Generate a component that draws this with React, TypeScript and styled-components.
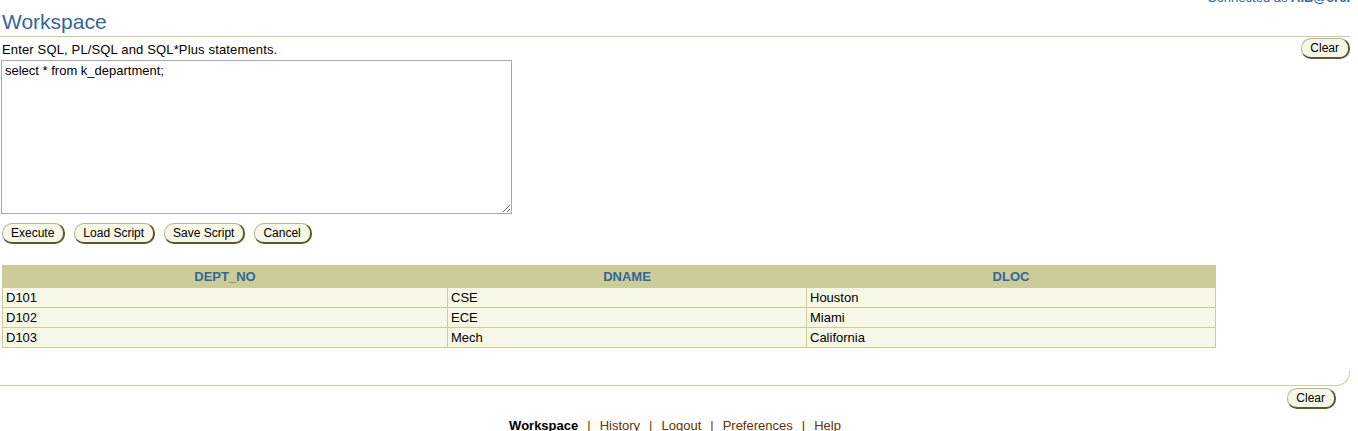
import React from "react";
import styled, { createGlobalStyle } from "styled-components";

const Global = createGlobalStyle`
  html, body { margin: 0; padding: 0; background: #fff; }
  body { font-family: "Liberation Sans", Arial, sans-serif; font-size: 13px; color: #000; }
`;

const Page = styled.div`
  padding: 0 8px 0 0;
  display: flex;
  flex-direction: column;
`;

const HeaderRow = styled.div`
  display: flex;
  justify-content: space-between;
  align-items: flex-start;
  height: 36px;
  border-bottom: 1px solid #cccc99;
`;

const Title = styled.h1`
  margin: 10px 0 0 2px;
  font-size: 21px;
  font-weight: normal;
  color: #336699;
  line-height: 24px;
`;

const Connected = styled.div`
  margin-top: -10px;
  font-size: 13px;
  color: #336699;
  line-height: 15px;
  b { font-weight: bold; }
`;

const InstrRow = styled.div`
  display: flex;
  justify-content: space-between;
  align-items: center;
  height: 23px;
  padding-left: 2px;
`;

const Instr = styled.span`
  font-size: 13px;
  line-height: 15px;
  margin-top: 1px;
  letter-spacing: 0.15px;
`;

const Btn = styled.button`
  font-family: "Liberation Sans", Arial, sans-serif;
  font-size: 12px;
  color: #000;
  background: #f7f7e7;
  height: 21px;
  padding: 0 9px 0 8px;
  border-radius: 10px;
  border-top: 1px solid #b5b59c;
  border-left: 1px solid #b5b59c;
  border-right: 2px solid #5a5a2a;
  border-bottom: 2px solid #5a5a2a;
  line-height: 16px;
  cursor: pointer;
`;

const Editor = styled.textarea`
  margin: 0 0 0 1px;
  width: 511px;
  height: 154px;
  box-sizing: border-box;
  border: 1px solid #a9a9a9;
  font-family: "Liberation Sans", Arial, sans-serif;
  font-size: 13px;
  padding: 2px 3px;
  resize: both;
  display: block;
`;

const ButtonBar = styled.div`
  display: flex;
  gap: 9px;
  padding-left: 2px;
  margin-top: 9px;
`;

const Grid = styled.table`
  margin: 21px 0 0 2px;
  border-collapse: collapse;
  width: 1213px;
  table-layout: fixed;
`;

const Th = styled.th`
  background: #cccc99;
  color: #336699;
  font-weight: bold;
  font-size: 13px;
  height: 21px;
  padding: 0 4px;
  border: 1px solid #cccc99;
  border-left-color: #f7f7e7;
  &:first-child { border-left-color: #cccc99; }
`;

const Td = styled.td`
  background: #f7f7e7;
  font-size: 13px;
  height: 19px;
  padding: 0 3px;
  border: 1px solid #cccc99;
  line-height: 15px;
`;

const BottomRule = styled.div`
  margin-top: 23px;
  height: 14px;
  border-bottom: 1px solid #cccc99;
  border-right: 1px solid #cccc99;
  border-bottom-right-radius: 14px;
`;

const BottomClearRow = styled.div`
  display: flex;
  justify-content: flex-end;
  padding-right: 14px;
  margin-top: 2px;
`;

const Footer = styled.div`
  display: flex;
  justify-content: center;
  gap: 9px;
  margin-top: 9px;
  font-size: 13px;
  color: #663300;
  line-height: 15px;
  padding-left: 0;
`;

const FootLink = styled.a<{ $active?: boolean }>`
  color: ${(p) => (p.$active ? "#000" : "#663300")};
  font-weight: ${(p) => (p.$active ? "bold" : "normal")};
  text-decoration: none;
`;

const Sep = styled.span`
  color: #663300;
`;

const rows = [
  ["D101", "CSE", "Houston"],
  ["D102", "ECE", "Miami"],
  ["D103", "Mech", "California"],
];

const links = ["Workspace", "History", "Logout", "Preferences", "Help"];

export default function App() {
  return (
    <>
      <Global />
      <Page>
        <HeaderRow>
          <Title>Workspace</Title>
          <Connected>
            Connected as <b>AIB@orcl</b>
          </Connected>
        </HeaderRow>
        <InstrRow>
          <Instr>Enter SQL, PL/SQL and SQL*Plus statements.</Instr>
          <Btn>Clear</Btn>
        </InstrRow>
        <Editor defaultValue="select * from k_department;" />
        <ButtonBar>
          <Btn>Execute</Btn>
          <Btn>Load Script</Btn>
          <Btn>Save Script</Btn>
          <Btn>Cancel</Btn>
        </ButtonBar>
        <Grid>
          <colgroup>
            <col style={{ width: 445 }} />
            <col style={{ width: 359 }} />
            <col style={{ width: 409 }} />
          </colgroup>
          <thead>
            <tr>
              <Th>DEPT_NO</Th>
              <Th>DNAME</Th>
              <Th>DLOC</Th>
            </tr>
          </thead>
          <tbody>
            {rows.map((r) => (
              <tr key={r[0]}>
                {r.map((c, i) => (
                  <Td key={i}>{c}</Td>
                ))}
              </tr>
            ))}
          </tbody>
        </Grid>
        <BottomRule />
        <BottomClearRow>
          <Btn>Clear</Btn>
        </BottomClearRow>
        <Footer>
          {links.map((l, i) => (
            <React.Fragment key={l}>
              {i > 0 && <Sep>|</Sep>}
              <FootLink href="#" $active={i === 0}>
                {l}
              </FootLink>
            </React.Fragment>
          ))}
        </Footer>
      </Page>
    </>
  );
}
